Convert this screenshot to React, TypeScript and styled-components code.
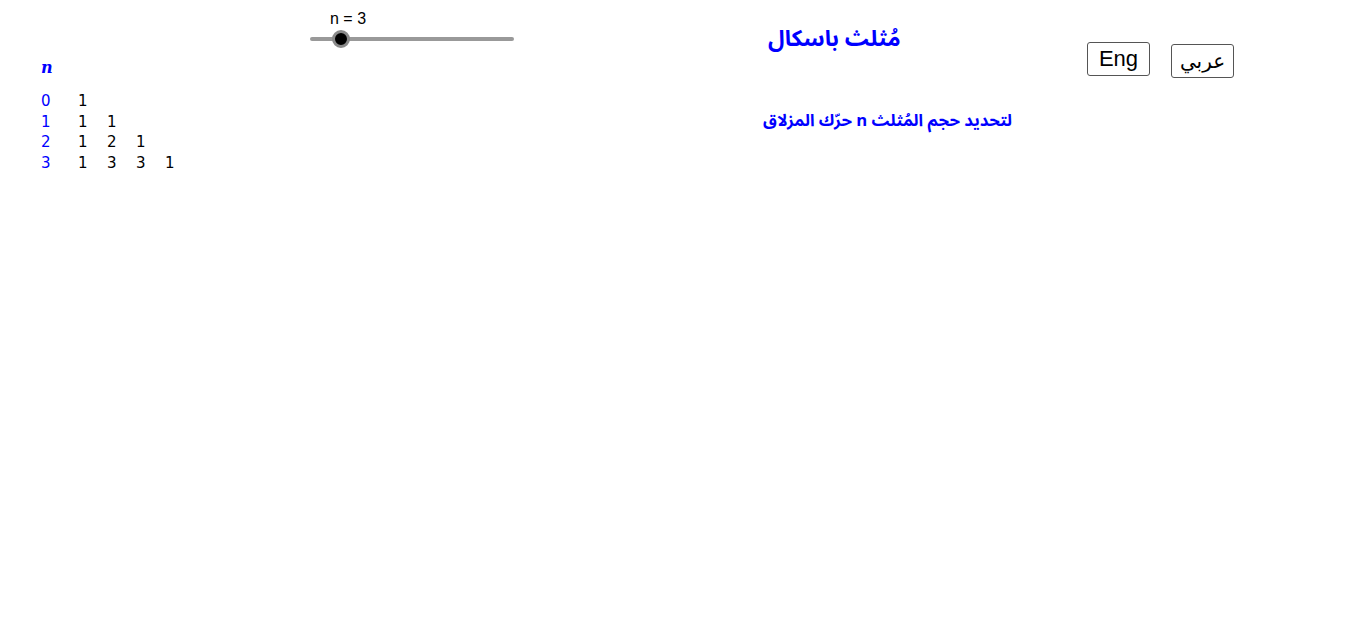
import React from "react";
import styled, { createGlobalStyle } from "styled-components";

const Global = createGlobalStyle`
  html, body { margin: 0; padding: 0; background: #fff; }
  body { font-family: "DejaVu Sans", "Liberation Sans", sans-serif; }
`;

const Canvas = styled.div`
  position: relative;
  width: 1366px;
  height: 631px;
  overflow: hidden;
  background: #ffffff;
`;

/* GeoGebra graphics view: each object sits at its own canvas coordinates */
const Placed = styled.div<{ $x: number; $y: number }>`
  position: absolute;
  left: ${(p) => p.$x}px;
  top: ${(p) => p.$y}px;
`;

const SliderBox = styled.div`
  display: flex;
  flex-direction: column;
  gap: 9px;
`;

const LabelRow = styled.div`
  padding-left: 20px;
`;

const SliderLabel = styled.div`
  font-family: "Liberation Sans", Arial, sans-serif;
  font-size: 16px;
  color: #000;
  line-height: 18px;
`;

const Track = styled.div`
  position: relative;
  width: 204px;
  height: 4px;
  border-radius: 2px;
  background: #999999;
`;

const Knob = styled.div`
  position: absolute;
  top: 50%;
  width: 12px;
  height: 12px;
  border-radius: 50%;
  background: #000;
  border: 3px solid #8a8a8a;
  transform: translate(-50%, -50%);
`;

const MathN = styled.div`
  font-family: "DejaVu Serif", "Liberation Serif", serif;
  font-style: italic;
  font-weight: bold;
  font-size: 16px;
  color: #0000ff;
  line-height: 18px;
`;

const Table = styled.div`
  display: grid;
  grid-template-columns: 37px repeat(4, 29px);
  grid-auto-rows: 20.5px;
  font-family: "DejaVu Sans", "Liberation Sans", sans-serif;
  font-size: 15px;
  line-height: 20px;
`;

const Index = styled.div`
  color: #0000ff;
`;

const Cell = styled.div`
  color: #000;
`;

const ArabicText = styled.div<{ $size: number }>`
  direction: rtl;
  white-space: nowrap;
  font-family: "Noto Sans Arabic", "DejaVu Sans", sans-serif;
  font-weight: bold;
  font-size: ${(p) => p.$size}px;
  color: #0000ff;
  line-height: 1.2;
`;

const LangButton = styled.button<{ $fs: number }>`
  box-sizing: border-box;
  width: 63px;
  height: 34px;
  padding: 0;
  background: #fff;
  border: 1px solid #555;
  border-radius: 3px;
  color: #000;
  font-family: "Liberation Sans", "DejaVu Sans", Arial, sans-serif;
  font-size: ${(p) => p.$fs}px;
  display: flex;
  align-items: center;
  justify-content: center;
  cursor: pointer;
`;

const rows = [[1], [1, 1], [1, 2, 1], [1, 3, 3, 1]];

export default function App() {
  const n = 3;
  const knobPos = 31;
  return (
    <>
      <Global />
      <Canvas>
        <Placed $x={310} $y={10}>
          <SliderBox>
            <LabelRow>
              <SliderLabel>n = {n}</SliderLabel>
            </LabelRow>
            <Track>
              <Knob style={{ left: knobPos }} />
            </Track>
          </SliderBox>
        </Placed>

        <Placed $x={41} $y={59}>
          <MathN>n</MathN>
        </Placed>

        <Placed $x={41} $y={91}>
          <Table>
            {rows.map((r, i) => (
              <React.Fragment key={i}>
                <Index style={{ gridRow: i + 1, gridColumn: 1 }}>{i}</Index>
                {r.map((v, j) => (
                  <Cell key={j} style={{ gridRow: i + 1, gridColumn: j + 2 }}>
                    {v}
                  </Cell>
                ))}
              </React.Fragment>
            ))}
          </Table>
        </Placed>

        <Placed $x={768} $y={26}>
          <ArabicText $size={22.5}>مُثلث باسكال</ArabicText>
        </Placed>

        <Placed $x={763} $y={111}>
          <ArabicText $size={16.7}>لتحديد حجم المُثلث n حرّك المزلاق</ArabicText>
        </Placed>

        <Placed $x={1087} $y={42}>
          <LangButton $fs={22}>Eng</LangButton>
        </Placed>

        <Placed $x={1171} $y={44}>
          <LangButton $fs={20} dir="rtl">عربي</LangButton>
        </Placed>
      </Canvas>
    </>
  );
}
